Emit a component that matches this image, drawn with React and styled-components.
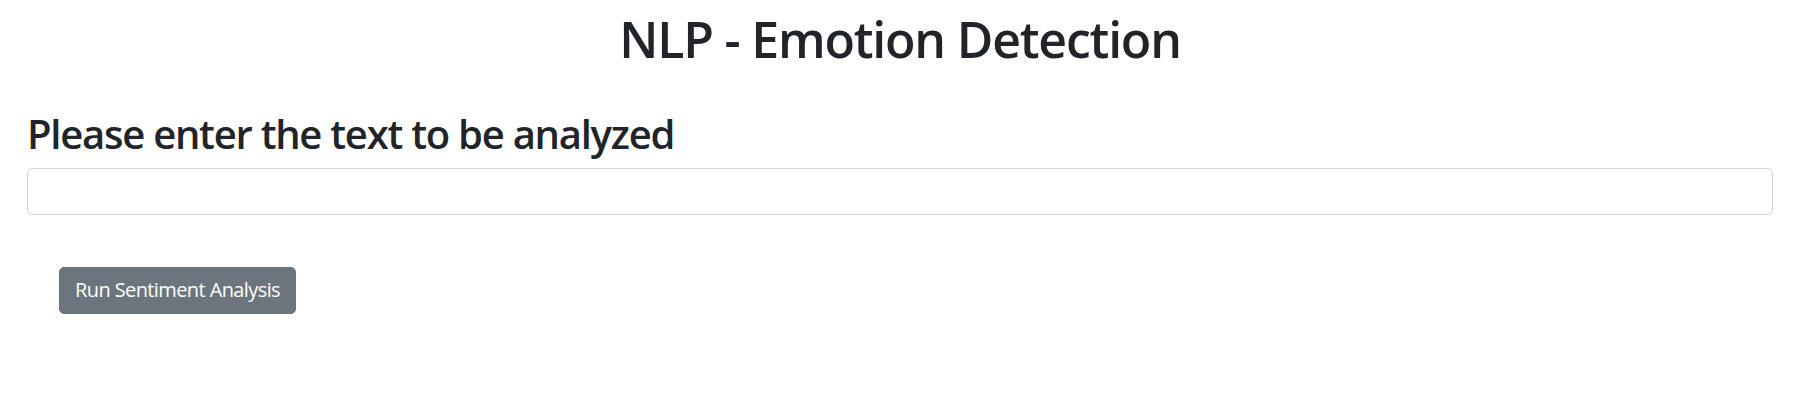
import React from "react";
import styled, { createGlobalStyle } from "styled-components";

const GlobalStyle = createGlobalStyle`
  html, body { margin: 0; padding: 0; background: #fff; }
  body {
    font-family: "Open Sans", "Noto Sans", sans-serif;
    color: #212529;
  }
  * { box-sizing: border-box; }
`;

const Page = styled.div`
  padding: 9px 34px 0 27px;
  display: flex;
  flex-direction: column;
`;

const Title = styled.h1`
  margin: 0;
  text-align: center;
  font-size: 50px;
  font-weight: 600;
  line-height: 1.2;
  letter-spacing: -1.2px;
`;

const Heading = styled.h2`
  margin: 41px 0 0;
  font-size: 40px;
  font-weight: 600;
  line-height: 1.2;
  letter-spacing: -1.25px;
`;

const TextInput = styled.input`
  margin-top: 9.5px;
  width: 100%;
  height: 47px;
  padding: 7.5px 15px;
  font-family: inherit;
  font-size: 20px;
  color: #495057;
  background: #fff;
  border: 1px solid #ced4da;
  border-radius: 5px;
  outline: none;
`;

const ButtonRow = styled.div`
  display: flex;
  padding: 52px 0 0 32px;
`;

const Button = styled.button`
  font-family: inherit;
  font-size: 20px;
  line-height: 1.5;
  padding: 7.5px 15px;
  letter-spacing: -0.6px;
  color: #fff;
  background: #6c757d;
  border: 1px solid #6c757d;
  border-radius: 5px;
  cursor: pointer;
`;

export default function App() {
  return (
    <>
      <GlobalStyle />
      <Page>
        <Title>NLP - Emotion Detection</Title>
        <Heading>Please enter the text to be analyzed</Heading>
        <TextInput type="text" />
        <ButtonRow>
          <Button>Run Sentiment Analysis</Button>
        </ButtonRow>
      </Page>
    </>
  );
}
